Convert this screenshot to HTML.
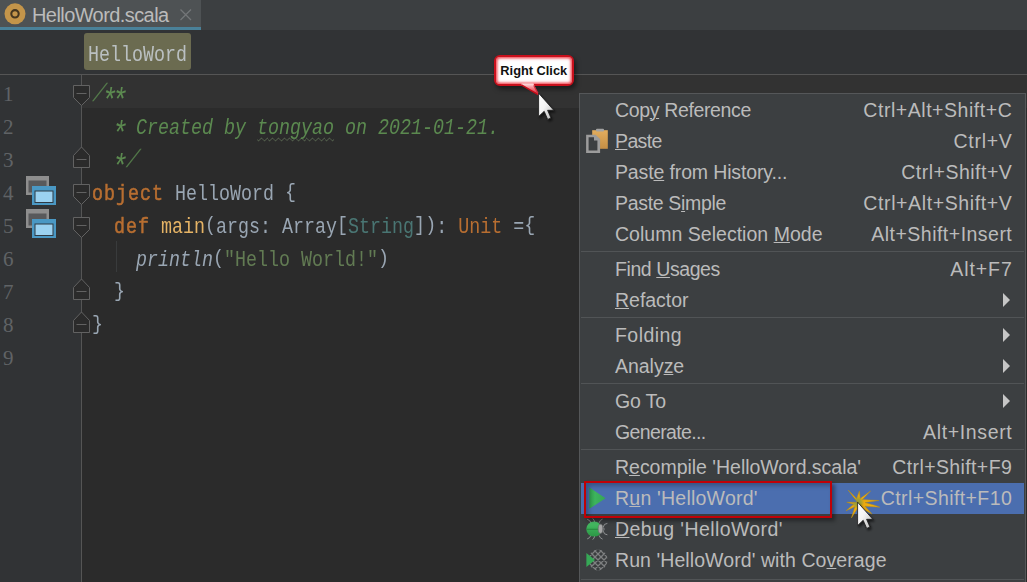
<!DOCTYPE html>
<html><head><meta charset="utf-8"><title>HelloWord.scala</title>
<style>
html,body{margin:0;padding:0;}
body{width:1027px;height:582px;overflow:hidden;background:#2b2b2b;position:relative;font-family:"Liberation Sans",sans-serif;}
.abs{position:absolute;}
svg{position:absolute;overflow:visible;}
/* tab bar */
#tabbar{left:0;top:0;width:1027px;height:30px;background:#3c3f41;}
#tab{left:0;top:0;width:201px;height:27px;background:#4e5254;border-bottom:3px solid #4a8199;}
#tabtxt{left:32px;top:2.5px;font-size:20px;line-height:24px;color:#bbbbbb;white-space:nowrap;letter-spacing:-0.58px;}
/* breadcrumb */
#crumbbar{left:0;top:30px;width:1027px;height:44px;background:#313335;border-bottom:1px solid #555555;}
#chip{left:84px;top:33px;width:107px;height:37px;background:#6b6b50;border-radius:3px;}
/* editor */
#gutter{left:0;top:75px;width:81px;height:507px;background:#313335;}
#gline{left:81px;top:75px;width:1px;height:507px;background:#555555;}
#caretrow{left:82px;top:75px;width:945px;height:33px;background:#323232;}
.ln{left:3px;width:14px;height:33px;line-height:33px;font-family:"Liberation Serif",serif;font-size:21px;color:#606366;}
.code{left:92px;height:33px;line-height:33px;white-space:pre;font-family:"Liberation Mono",monospace;font-size:22.5px;color:#a9b7c6;transform-origin:0 50%;transform:scaleX(0.8148);opacity:0.88;}
.code b{color:#cc7832;letter-spacing:1.227px;font-weight:normal;-webkit-text-stroke:0.55px #cc7832;}
.fn{color:#ffc66d;}
.cm{color:#629755;font-style:italic;}
.kw{color:#cc7832;}
.ty{color:#4e807d;}
.st{color:#6a8759;}
.it{font-style:italic;}
.sl{display:inline-block;transform:translate(2px,-1px) skewX(-17deg) scaleY(1.12);opacity:0.8;}
.br{display:inline-block;font-style:inherit;transform-origin:50% 60%;transform:translateY(-2px) scaleY(0.9);}
.as{display:inline-block;transform-origin:50% 35%;transform:translateY(5.5px) scale(1.45);}
.wav{text-decoration:underline wavy #62755a;text-decoration-thickness:1px;text-underline-offset:2.5px;text-decoration-skip-ink:none;}
/* menu */
#menu{left:579px;top:93px;width:445px;height:500px;background:#3c3f41;border:1px solid #555759;}
#hl{left:581px;top:483px;width:443px;height:31px;background:#4b6eaf;}
#redbox{left:584px;top:481px;width:244px;height:33px;border:2px solid #c00006;box-shadow:3px 3px 4px rgba(0,0,0,0.38), inset 3px 3px 4px rgba(0,0,0,0.25);}
.mi{left:615px;height:31px;line-height:31px;font-size:19.5px;color:#bbbbbb;white-space:nowrap;}
.sc{height:31px;line-height:31px;font-size:19.5px;color:#bbbbbb;white-space:nowrap;}
.sep{left:581px;width:443px;height:1px;background:#515456;}
.mi u{text-decoration:underline;text-underline-offset:1.2px;text-decoration-thickness:1px;}
.arr{left:1003px;width:0;height:0;border-left:7.8px solid #c6c6c6;border-top:7px solid transparent;border-bottom:7px solid transparent;}
/* callout */
#callout{left:493.5px;top:55px;width:76.5px;height:27px;background:#ffffff;border:2px solid #c8101c;border-radius:6px;box-shadow:inset 0 0 2.5px 1.5px rgba(240,60,72,0.9), 2px 3px 5px rgba(0,0,0,0.5);}
#callouttxt{left:493.5px;top:55px;width:80.5px;height:31px;line-height:31px;text-align:center;font-size:12.8px;font-weight:bold;color:#111111;white-space:nowrap;}
</style></head>
<body>
<div id="tabbar" class="abs"></div>
<div id="tab" class="abs"></div>
<svg style="left:4px;top:3px" width="22" height="22" viewBox="0 0 22 22"><circle cx="11" cy="10.8" r="10.5" fill="#c4954a"/><circle cx="11" cy="10.8" r="3.7" fill="none" stroke="#45361f" stroke-width="2.1"/></svg>
<div id="tabtxt" class="abs">HelloWord.scala</div>
<svg style="left:180px;top:9px" width="12" height="12" viewBox="0 0 12 12"><path d="M0.5 0.5 L11 11 M11 0.5 L0.5 11" stroke="#737678" stroke-width="1.3" fill="none"/></svg>
<div id="crumbbar" class="abs"></div>
<div id="chip" class="abs"></div>
<div class="abs code" style="left:88px;top:39px;color:#c6ccd2">HelloWord</div>
<div id="gutter" class="abs"></div>
<div id="caretrow" class="abs"></div>
<div id="gline" class="abs"></div>
<div class="abs ln" style="top:77.7px">1</div>
<div class="abs code" style="top:79.0px"><span class="cm"><i class="sl">/</i><i class="as">*</i><i class="as">*</i></span></div>
<div class="abs ln" style="top:110.7px">2</div>
<div class="abs code" style="top:112.0px">  <span class="cm"><i class="as">*</i> Created by <span class="wav">tongyao</span> on 2021-01-21.</span></div>
<div class="abs ln" style="top:143.7px">3</div>
<div class="abs code" style="top:145.0px">  <span class="cm"><i class="as">*</i><i class="sl">/</i></span></div>
<div class="abs ln" style="top:176.7px">4</div>
<div class="abs code" style="top:178.0px"><b>object</b> HelloWord <i class="br">{</i></div>
<div class="abs ln" style="top:209.7px">5</div>
<div class="abs code" style="top:211.0px">  <b>def</b> <span class="fn">main</span><i class="br">(</i>args: Array<i class="br">[</i><span class="ty">String</span><i class="br">]</i><i class="br">)</i>: <span class="kw">Unit</span> =<i class="br">{</i></div>
<div class="abs ln" style="top:242.7px">6</div>
<div class="abs code" style="top:244.0px">    <span class="it">println</span><i class="br">(</i><span class="st">"Hello World!"</span><i class="br">)</i></div>
<div class="abs ln" style="top:275.7px">7</div>
<div class="abs code" style="top:277.0px">  <i class="br">}</i></div>
<div class="abs ln" style="top:308.7px">8</div>
<div class="abs code" style="top:310.0px"><i class="br">}</i></div>
<div class="abs ln" style="top:341.7px">9</div>
<div class="abs" style="left:116px;top:241px;width:1px;height:31px;background:#393b3c"></div>
<svg style="left:0;top:0" width="100" height="582" viewBox="0 0 100 582"><polygon points="73.5,85.5 89.5,85.5 89.5,97.5 81.5,105.5 73.5,97.5" stroke="#626262" stroke-width="1" fill="#2b2b2b"/><path d="M76.5 93.5 H86.5" stroke="#626262" stroke-width="1" fill="none"/><polygon points="81.5,147 89.5,155.5 89.5,167.5 73.5,167.5 73.5,155.5" stroke="#626262" stroke-width="1" fill="#2b2b2b"/><path d="M76.5 159.5 H86.5" stroke="#626262" stroke-width="1" fill="none"/><polygon points="73.5,184.5 89.5,184.5 89.5,196.5 81.5,204.5 73.5,196.5" stroke="#626262" stroke-width="1" fill="#2b2b2b"/><path d="M76.5 192.5 H86.5" stroke="#626262" stroke-width="1" fill="none"/><polygon points="73.5,217.5 89.5,217.5 89.5,229.5 81.5,237.5 73.5,229.5" stroke="#626262" stroke-width="1" fill="#2b2b2b"/><path d="M76.5 225.5 H86.5" stroke="#626262" stroke-width="1" fill="none"/><polygon points="81.5,279 89.5,287.5 89.5,299.5 73.5,299.5 73.5,287.5" stroke="#626262" stroke-width="1" fill="#2b2b2b"/><path d="M76.5 291.5 H86.5" stroke="#626262" stroke-width="1" fill="none"/><polygon points="81.5,312 89.5,320.5 89.5,332.5 73.5,332.5 73.5,320.5" stroke="#626262" stroke-width="1" fill="#2b2b2b"/><path d="M76.5 324.5 H86.5" stroke="#626262" stroke-width="1" fill="none"/></svg>
<svg style="left:26px;top:176px" width="30" height="30" viewBox="0 0 30 30">
<rect x="0" y="0" width="23" height="19" fill="#8e8e8e"/><rect x="2.5" y="4.5" width="18" height="12" fill="#58595b"/>
<rect x="6" y="10" width="24" height="19" fill="#4a98c4"/><rect x="9" y="15" width="18" height="11.5" fill="#9bd2f1" stroke="#2f3a44" stroke-width="1"/>
</svg>
<svg style="left:26px;top:209px" width="30" height="30" viewBox="0 0 30 30">
<rect x="0" y="0" width="23" height="19" fill="#8e8e8e"/><rect x="2.5" y="4.5" width="18" height="12" fill="#58595b"/>
<rect x="6" y="10" width="24" height="19" fill="#4a98c4"/><rect x="9" y="15" width="18" height="11.5" fill="#9bd2f1" stroke="#2f3a44" stroke-width="1"/>
</svg>
<div id="menu" class="abs"></div>
<div id="hl" class="abs"></div>
<div id="m0" class="abs mi" style="top:95px;letter-spacing:-0.356px">Cop<u>y</u> Reference</div>
<div id="s0" class="abs sc" style="top:95px;left:863.3px;letter-spacing:0.543px">Ctrl+Alt+Shift+C</div>
<div id="m1" class="abs mi" style="top:126px;letter-spacing:-0.644px"><u>P</u>aste</div>
<div id="s1" class="abs sc" style="top:126px;left:953.6px;letter-spacing:0.693px">Ctrl+V</div>
<div id="m2" class="abs mi" style="top:157px;letter-spacing:-0.135px">Past<u>e</u> from History...</div>
<div id="s2" class="abs sc" style="top:157px;left:901.2px;letter-spacing:0.496px">Ctrl+Shift+V</div>
<div id="m3" class="abs mi" style="top:188px;letter-spacing:-0.320px">Paste S<u>i</u>mple</div>
<div id="s3" class="abs sc" style="top:188px;left:863.3px;letter-spacing:0.615px">Ctrl+Alt+Shift+V</div>
<div id="m4" class="abs mi" style="top:219px;letter-spacing:0.023px">Column Selection <u>M</u>ode</div>
<div id="s4" class="abs sc" style="top:219px;left:871.3px;letter-spacing:0.478px">Alt+Shift+Insert</div>
<div id="m5" class="abs mi" style="top:254px;letter-spacing:-0.420px">Find <u>U</u>sages</div>
<div id="s5" class="abs sc" style="top:254px;left:950.3px;letter-spacing:0.919px">Alt+F7</div>
<div id="m6" class="abs mi" style="top:285px;letter-spacing:-0.031px"><u>R</u>efactor</div>
<div class="abs arr" style="top:292.5px"></div>
<div id="m7" class="abs mi" style="top:320px;letter-spacing:0.455px">Folding</div>
<div class="abs arr" style="top:327.5px"></div>
<div id="m8" class="abs mi" style="top:351px;letter-spacing:-0.032px">Analy<u>z</u>e</div>
<div class="abs arr" style="top:358.5px"></div>
<div id="m9" class="abs mi" style="top:386px;letter-spacing:-0.172px">Go To</div>
<div class="abs arr" style="top:393.5px"></div>
<div id="m10" class="abs mi" style="top:417px;letter-spacing:-0.636px">Generate...</div>
<div id="s10" class="abs sc" style="top:417px;left:923.1px;letter-spacing:0.642px">Alt+Insert</div>
<div id="m11" class="abs mi" style="top:452px;letter-spacing:-0.024px">R<u>e</u>compile 'HelloWord.scala'</div>
<div id="s11" class="abs sc" style="top:452px;left:892.3px;letter-spacing:0.384px">Ctrl+Shift+F9</div>
<div id="m12" class="abs mi" style="top:483px;letter-spacing:0.225px">R<u>u</u>n 'HelloWord'</div>
<div id="s12" class="abs sc" style="top:483px;left:880.7px;letter-spacing:0.413px">Ctrl+Shift+F10</div>
<div id="m13" class="abs mi" style="top:514px;letter-spacing:0.405px"><u>D</u>ebug 'HelloWord'</div>
<div id="m14" class="abs mi" style="top:545px;letter-spacing:0.076px">Run 'HelloWord' with Co<u>v</u>erage</div>
<div class="abs sep" style="top:251px"></div>
<div class="abs sep" style="top:317px"></div>
<div class="abs sep" style="top:383px"></div>
<div class="abs sep" style="top:449px"></div>
<div class="abs sep" style="top:579px"></div>
<svg style="left:585px;top:127px" width="26" height="28" viewBox="0 0 26 28">
<defs><linearGradient id="pg" x1="0" y1="0" x2="0" y2="1"><stop offset="0" stop-color="#e2ad5e"/><stop offset="1" stop-color="#c58f45"/></linearGradient></defs>
<rect x="7.2" y="3.2" width="15.6" height="18.6" fill="url(#pg)"/>
<rect x="11" y="1.8" width="8" height="2.6" rx="1" fill="#a3a3a3"/>
<path d="M1.1 7.8 H10.5 L15.1 12 V26 H1.1 Z" fill="#9c9c9c"/>
<path d="M3.6 10.3 H9 V13.6 H12.4 V23.5 H3.6 Z" fill="#3c3f41"/>
</svg>
<svg style="left:589px;top:487px" width="18" height="22" viewBox="0 0 18 22"><defs><linearGradient id="rg" x1="0" y1="0" x2="1" y2="0"><stop offset="0" stop-color="#2f9a4b"/><stop offset="0.35" stop-color="#3db45c"/><stop offset="1" stop-color="#35a655"/></linearGradient></defs><path d="M0.4 0.6 L16.6 11.2 L0.4 21.8 Z" fill="url(#rg)"/></svg>
<svg style="left:584px;top:517px" width="26" height="26" viewBox="0 0 26 26">
<defs><linearGradient id="bg1" x1="0" y1="0" x2="0" y2="1"><stop offset="0" stop-color="#4cc069"/><stop offset="0.5" stop-color="#38ab54"/><stop offset="1" stop-color="#2c9646"/></linearGradient></defs>
<g stroke="#8f9192" stroke-width="1" fill="none" stroke-linecap="round"><path d="M6.8 5.6 Q6.4 3.2 3.6 2.4 M10.6 4.8 Q10.4 3 9 1.8 M15.2 5.4 Q15.8 3 18.2 2.2 M6.8 18.6 Q6.4 21 3.6 21.8 M10.6 19.4 Q10.4 21.2 9 22.4 M15.2 18.8 Q15.8 21.2 18.2 22 M19.4 9.6 Q19.6 6.6 23 6.4 M19.4 14.6 Q19.6 17.6 23 17.8 M19.8 10.8 Q20.6 12.2 19.8 13.4"/></g>
<ellipse cx="10.1" cy="12.1" rx="7.8" ry="7.5" fill="url(#bg1)"/>
<path d="M2.4 12.3 H15" stroke="#27873f" stroke-width="1"/>
<ellipse cx="16.5" cy="11.8" rx="2.3" ry="4.6" fill="#a6a6a6" stroke="#6c6e6f" stroke-width="0.7"/>
</svg>
<svg style="left:586px;top:549px" width="24" height="24" viewBox="0 0 24 24">
<defs><clipPath id="cc"><ellipse cx="12" cy="11" rx="9.6" ry="10.6"/></clipPath></defs>
<g clip-path="url(#cc)"><rect x="0" y="0" width="24" height="24" fill="#393c3e"/><path d="M-38.0 25.0 L-10.0 -3.0 M-38.0 -3.0 L-10.0 25.0 M-32.0 25.0 L-4.0 -3.0 M-32.0 -3.0 L-4.0 25.0 M-26.0 25.0 L2.0 -3.0 M-26.0 -3.0 L2.0 25.0 M-20.0 25.0 L8.0 -3.0 M-20.0 -3.0 L8.0 25.0 M-14.0 25.0 L14.0 -3.0 M-14.0 -3.0 L14.0 25.0 M-8.0 25.0 L20.0 -3.0 M-8.0 -3.0 L20.0 25.0 M-2.0 25.0 L26.0 -3.0 M-2.0 -3.0 L26.0 25.0 M4.0 25.0 L32.0 -3.0 M4.0 -3.0 L32.0 25.0 M10.0 25.0 L38.0 -3.0 M10.0 -3.0 L38.0 25.0 M16.0 25.0 L44.0 -3.0 M16.0 -3.0 L44.0 25.0 M22.0 25.0 L50.0 -3.0 M22.0 -3.0 L50.0 25.0 M28.0 25.0 L56.0 -3.0 M28.0 -3.0 L56.0 25.0 M34.0 25.0 L62.0 -3.0 M34.0 -3.0 L62.0 25.0" stroke="#7d7f80" stroke-width="1.3" fill="none"/></g>
<path d="M0.4 4 L9 11 L0.4 18.1 Z" fill="#36a856"/>
</svg>
<div id="redbox" class="abs"></div>
<svg style="left:0;top:0" width="0" height="0"><defs><linearGradient id="cg" x1="0" y1="0" x2="1" y2="1"><stop offset="0" stop-color="#ffffff"/><stop offset="0.45" stop-color="#f4f4f4"/><stop offset="1" stop-color="#b4b4b4"/></linearGradient>
<filter id="sh" x="-50%" y="-50%" width="200%" height="200%"><feDropShadow dx="1.5" dy="2" stdDeviation="1.2" flood-color="#000" flood-opacity="0.6"/></filter></defs></svg>
<div id="callout" class="abs"></div>
<svg style="left:515px;top:80px" width="30" height="20" viewBox="0 0 30 20"><defs><linearGradient id="tg" x1="0" y1="0" x2="0" y2="1"><stop offset="0" stop-color="#fde4e6"/><stop offset="0.4" stop-color="#f4808a"/><stop offset="1" stop-color="#dc1828"/></linearGradient></defs><path d="M6.6 3.6 L6.4 4.9 L23.6 14.9 L18.4 3.6 Z" fill="url(#tg)"/><path d="M6.4 4.9 L23.6 14.9" stroke="#c40d18" stroke-width="1.6" fill="none"/><path d="M23.6 14.6 L18.8 5.4" stroke="#d22b3a" stroke-width="1.2" fill="none"/></svg>
<div id="callouttxt" class="abs">Right Click</div>
<svg style="left:537.5px;top:92.8px" width="19" height="30" viewBox="0 0 19 30" filter="url(#sh)"><path d="M0.6 0.2 V23.5 L6.2 18.3 L9.7 26.4 L13 25 L9.6 17.3 H15.8 Z" fill="url(#cg)" stroke="#161616" stroke-width="0.8" stroke-linejoin="round"/></svg>
<svg style="left:844px;top:487px" width="38" height="34" viewBox="0 0 38 34">
<defs><radialGradient id="sg" gradientUnits="userSpaceOnUse" cx="13.6" cy="15.4" r="16"><stop offset="0" stop-color="#8a9a3e"/><stop offset="0.22" stop-color="#a9a030"/><stop offset="0.42" stop-color="#ecaa10"/><stop offset="1" stop-color="#f0ae0c"/></radialGradient></defs>
<polygon points="13.4,15.3 4.1,3 12.6,11.6 15.4,3.9 16.2,11.4 26.6,3.9 18.4,12.6 35,13.5 21,15.6 31.3,18.4 35.8,20.2 21,19.2 28,27 17.5,21.5 15,28.5 13.4,21.5 7.4,31 10.8,19.8 2,23.8 9.6,17.3 2.7,15.3" fill="url(#sg)" stroke="#b58a14" stroke-width="0.5" stroke-linejoin="round"/>
</svg>
<svg style="left:857.4px;top:502.3px" width="19" height="30" viewBox="0 0 19 30" filter="url(#sh)"><path d="M0.6 0.2 V23.5 L6.2 18.3 L9.7 26.4 L13 25 L9.6 17.3 H15.8 Z" fill="url(#cg)" stroke="#161616" stroke-width="0.8" stroke-linejoin="round"/></svg>
</body></html>
